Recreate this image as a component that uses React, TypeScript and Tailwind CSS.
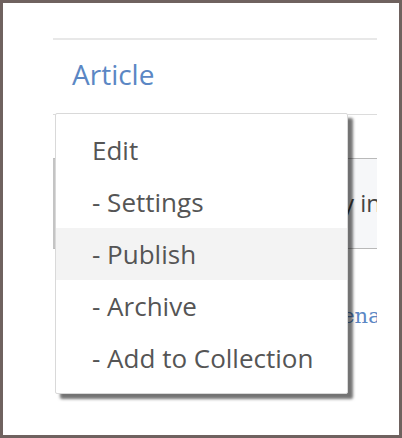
import React from "react";

const items = ["Edit", "- Settings", "- Publish", "- Archive", "- Add to Collection"];

export default function App() {
  return (
    <div
      className="w-[402px] h-[438px] border-[3px] border-[#6f625f] bg-white relative overflow-hidden"
      style={{ fontFamily: '"Open Sans", "Noto Sans", sans-serif' }}
    >
      <div className="ml-[50px] w-[324px] h-full overflow-hidden relative">
        <div className="pt-[35px]">
          <div className="h-[2px] bg-[#e8e8e8]" />
          <div className="h-[74px] pl-[19px] pb-[6px] flex items-center text-[28px] text-[#5b87c4] leading-none">
            Article
          </div>
          <div className="h-[1px] bg-[#dcdcdc]" />
          <div className="h-[43px]" />
          <div className="h-[91px] bg-[#f6f7f9] border-y border-[#b9b9b9] border-l-2 border-l-[#c4c4c4] flex items-center justify-end pb-[2px]">
            <span className="text-[24px] text-[#444] whitespace-nowrap mr-[-4px]">
              Display in
            </span>
          </div>
          <div className="h-[52px]" />
          <div className="flex justify-end">
            <span
              className="text-[21px] text-[#5b87c4] whitespace-nowrap mr-[-36px]"
              style={{ fontFamily: '"DejaVu Serif", serif' }}
            >
              Rename
            </span>
          </div>
        </div>
      </div>

      <div className="absolute left-[52px] top-[110px] w-[293px] h-[281px] bg-white border border-[#d9d9d9] rounded-[2px] shadow-[5px_5px_3px_rgba(0,0,0,0.55)] pt-[10px]">
        {items.map((t) => (
          <div
            key={t}
            className={`h-[52px] pl-[36px] flex items-center text-[26px] text-[#555] leading-none whitespace-nowrap ${
              t === "- Publish" ? "bg-[#f3f3f3]" : ""
            }`}
          >
            {t}
          </div>
        ))}
      </div>
    </div>
  );
}
